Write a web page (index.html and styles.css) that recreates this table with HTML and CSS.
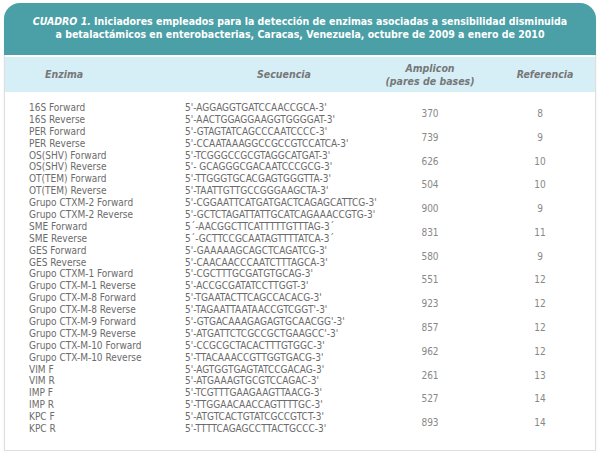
FILE: index.html
```html
<!DOCTYPE html>
<html lang="es">
<head>
<meta charset="utf-8">
<link rel="stylesheet" href="styles.css">
</head>
<body>
<div class="card">
  <div class="title"><em>CUADRO 1.</em> Iniciadores empleados para la detección de enzimas asociadas a sensibilidad disminuida<br>a betalactámicos en enterobacterias, Caracas, Venezuela, octubre de 2009 a enero de 2010</div>
  <div class="head">
    <div class="h-enz">Enzima</div>
    <div class="h-seq">Secuencia</div>
    <div class="h-amp">Amplicon<br>(pares de bases)</div>
    <div class="h-ref">Referencia</div>
  </div>
  <div class="body">
    <div class="enz">16S Forward</div><div class="seq">5'-AGGAGGTGATCCAACCGCA-3'</div><div class="amp">370</div><div class="ref">8</div>
    <div class="enz">16S Reverse</div><div class="seq">5'-AACTGGAGGAAGGTGGGGAT-3'</div>
    <div class="enz">PER Forward</div><div class="seq">5'-GTAGTATCAGCCCAATCCCC-3'</div><div class="amp">739</div><div class="ref">9</div>
    <div class="enz">PER Reverse</div><div class="seq">5'-CCAATAAAGGCCGCCGTCCATCA-3'</div>
    <div class="enz">OS(SHV) Forward</div><div class="seq">5'-TCGGGCCGCGTAGGCATGAT-3'</div><div class="amp">626</div><div class="ref">10</div>
    <div class="enz">OS(SHV) Reverse</div><div class="seq">5'- GCAGGGCGACAATCCCGCG-3'</div>
    <div class="enz">OT(TEM) Forward</div><div class="seq">5'-TTGGGTGCACGAGTGGGTTA-3'</div><div class="amp">504</div><div class="ref">10</div>
    <div class="enz">OT(TEM) Reverse</div><div class="seq">5'-TAATTGTTGCCGGGAAGCTA-3'</div>
    <div class="enz">Grupo CTXM-2 Forward</div><div class="seq">5'-CGGAATTCATGATGACTCAGAGCATTCG-3'</div><div class="amp">900</div><div class="ref">9</div>
    <div class="enz">Grupo CTXM-2 Reverse</div><div class="seq">5'-GCTCTAGATTATTGCATCAGAAACCGTG-3'</div>
    <div class="enz">SME Forward</div><div class="seq">5´-AACGGCTTCATTTTTGTTTAG-3´</div><div class="amp">831</div><div class="ref">11</div>
    <div class="enz">SME Reverse</div><div class="seq">5´-GCTTCCGCAATAGTTTTATCA-3´</div>
    <div class="enz">GES Forward</div><div class="seq">5'-GAAAAAGCAGCTCAGATCG-3'</div><div class="amp">580</div><div class="ref">9</div>
    <div class="enz">GES Reverse</div><div class="seq">5'-CAACAACCCAATCTTTAGCA-3'</div>
    <div class="enz">Grupo CTXM-1 Forward</div><div class="seq">5'-CGCTTTGCGATGTGCAG-3'</div><div class="amp">551</div><div class="ref">12</div>
    <div class="enz">Grupo CTX-M-1 Reverse</div><div class="seq">5'-ACCGCGATATCCTTGGT-3'</div>
    <div class="enz">Grupo CTX-M-8 Forward</div><div class="seq">5'-TGAATACTTCAGCCACACG-3'</div><div class="amp">923</div><div class="ref">12</div>
    <div class="enz">Grupo CTX-M-8 Reverse</div><div class="seq">5'-TAGAATTAATAACCGTCGGT'-3'</div>
    <div class="enz">Grupo CTX-M-9 Forward</div><div class="seq">5'-GTGACAAAGAGAGTGCAACGG'-3'</div><div class="amp">857</div><div class="ref">12</div>
    <div class="enz">Grupo CTX-M-9 Reverse</div><div class="seq">5'-ATGATTCTCGCCGCTGAAGCC'-3'</div>
    <div class="enz">Grupo CTX-M-10 Forward</div><div class="seq">5'-CCGCGCTACACTTTGTGGC-3'</div><div class="amp">962</div><div class="ref">12</div>
    <div class="enz">Grupo CTX-M-10 Reverse</div><div class="seq">5'-TTACAAACCGTTGGTGACG-3'</div>
    <div class="enz">VIM F</div><div class="seq">5'-AGTGGTGAGTATCCGACAG-3'</div><div class="amp">261</div><div class="ref">13</div>
    <div class="enz">VIM R</div><div class="seq">5'-ATGAAAGTGCGTCCAGAC-3'</div>
    <div class="enz">IMP F</div><div class="seq">5'-TCGTTTGAAGAAGTTAACG-3'</div><div class="amp">527</div><div class="ref">14</div>
    <div class="enz">IMP R</div><div class="seq">5'-TTGGAACAACCAGTTTTGC-3'</div>
    <div class="enz">KPC F</div><div class="seq">5'-ATGTCACTGTATCGCCGTCT-3'</div><div class="amp">893</div><div class="ref">14</div>
    <div class="enz">KPC R</div><div class="seq">5'-TTTTCAGAGCCTTACTGCCC-3'</div>
  </div>
</div>
</body>
</html>
```
FILE: styles.css
```css
html, body {
  margin: 0;
  padding: 0;
  background: #ffffff;
}
body {
  font-family: "DejaVu Sans Condensed", "DejaVu Sans", sans-serif;
  color: #6b6b6b;
}
.card {
  box-sizing: border-box;
  width: 592px;
  height: 448px;
  margin: 3px 0 0 4px;
  border: 1px solid #dedede;
  border-top: none;
  border-radius: 16px 16px 0 0;
  box-shadow: 0 1px 2px rgba(0,0,0,0.08);
}
.title {
  box-sizing: border-box;
  height: 52px;
  margin: 0 -1px;
  padding-top: 12px;
  background: #4b9fa6;
  border-radius: 16px 16px 0 0;
  color: #ffffff;
  font-weight: bold;
  font-size: 10.5px;
  line-height: 13px;
  text-align: center;
}
.title em {
  font-style: italic;
}
.head {
  display: grid;
  grid-template-columns: 180px 190px 110px 1fr;
  align-items: center;
  height: 35px;
  margin-top: 2px;
  background: #d6eff7;
  color: #777777;
  font-weight: bold;
  font-style: italic;
  font-size: 10.5px;
  line-height: 13px;
}
.h-enz { padding-left: 40px; }
.h-seq { padding-left: 72px; }
.h-amp { text-align: center; }
.h-ref { text-align: center; padding-left: 10px; }
.body {
  display: grid;
  grid-template-columns: 180px 190px 110px 1fr;
  grid-auto-rows: 11.9px;
  padding-top: 10px;
  font-size: 10px;
  line-height: 11.9px;
}
.enz { padding-left: 24px; white-space: nowrap; }
.seq { white-space: nowrap; }
.amp, .ref {
  grid-row: span 2;
  display: flex;
  align-items: center;
  justify-content: center;
  color: #888888;
}
```
